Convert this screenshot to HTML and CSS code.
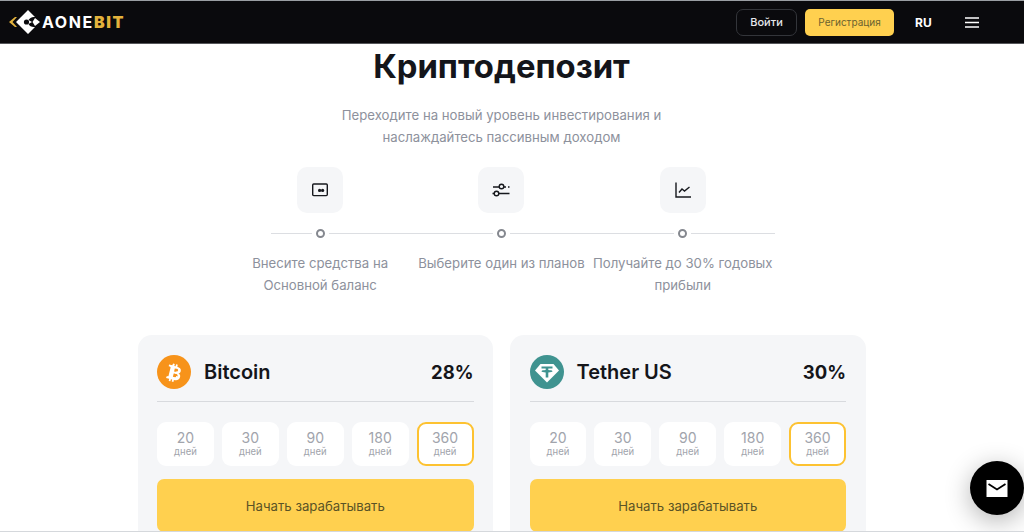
FILE: index.html
```html
<!DOCTYPE html>
<html lang="ru">
<head>
    <meta charset="utf-8">
    <title>Криптодепозит</title>
    <meta name="viewport" content="width=device-width, initial-scale=1.0">
    <link rel="stylesheet" href="styles.css">
</head>
<body>
    <header class="topbar">
        <a class="logo" href="#">
            <svg class="logo-mark" viewBox="0 0 33 26" width="33" height="26">
                <path d="M6 8 L0 13 L6 18 L8 18 L3.5 13 L8 8 Z" fill="#e3b23c"/>
                <path d="M19 1 L26 8 C23 7.5 20.5 9 19.5 11 L23 13 L19.5 15 C20.5 17 23 18.5 26 18 L19 25 L7 13 Z" fill="#fff"/>
                <path d="M26 9 L31 13 L26 17 L23.5 13 Z" fill="#fff"/>
                <circle cx="17.5" cy="13" r="2.6" fill="#0a0a0d"/>
            </svg>
            <span class="logo-text">AONE<b>BIT</b></span>
        </a>
        <nav class="topbar-nav">
            <a class="btn-login" href="#">Войти</a>
            <a class="btn-register" href="#">Регистрация</a>
            <span class="lang">RU</span>
            <svg class="burger" viewBox="0 0 14 11" width="14" height="11">
                <path d="M0 1 H14 M0 5.5 H14 M0 10 H14" stroke="#fff" stroke-width="1.6"/>
            </svg>
        </nav>
    </header>

    <main class="content">
        <h1>Криптодепозит</h1>
        <p class="lead">Переходите на новый уровень инвестирования и<br>наслаждайтесь пассивным доходом</p>

        <div class="steps">
            <div class="step step-first">
                <div class="step-icon">
                    <svg viewBox="0 0 16 14" width="16" height="14" fill="none">
                        <rect x="0.7" y="1" width="14.6" height="11.6" rx="1" stroke="#16181d" stroke-width="1.4"/>
                        <circle cx="7.6" cy="7.4" r="1.6" fill="#16181d"/>
                        <circle cx="10.6" cy="7.4" r="1.6" fill="#16181d"/>
                    </svg>
                </div>
                <div class="step-line"><i></i><span class="dot"></span><i></i></div>
                <p>Внесите средства на<br>Основной баланс</p>
            </div>
            <div class="step">
                <div class="step-icon">
                    <svg viewBox="0 0 18 14" width="18" height="14" fill="none" stroke="#16181d" stroke-width="1.4">
                        <path d="M1 4 H7 M12 4 H14 M16 4 H17.5 M0.5 10.5 H2 M7 10.5 H17.5"/>
                        <circle cx="9.5" cy="3.5" r="2.3"/>
                        <circle cx="4.5" cy="10.5" r="2.3"/>
                    </svg>
                </div>
                <div class="step-line"><i></i><span class="dot"></span><i></i></div>
                <p>Выберите один из планов</p>
            </div>
            <div class="step">
                <div class="step-icon">
                    <svg viewBox="0 0 16 16" width="16" height="16" fill="none" stroke="#16181d" stroke-width="1.4">
                        <path d="M1 0.5 V15 H16"/>
                        <path d="M4 10.5 L7 7 L9.5 9 L14.5 5"/>
                    </svg>
                </div>
                <div class="step-line"><i></i><span class="dot"></span><i></i></div>
                <p>Получайте до 30% годовых<br>прибыли</p>
            </div>
        </div>

        <div class="plans">
            <section class="plan">
                <div class="plan-head">
                    <svg class="coin" viewBox="0 0 34 34" width="34" height="34">
                        <circle cx="17" cy="17" r="17" fill="#f7931a"/>
                        <path transform="translate(1.5 0)" fill="#fff" fill-rule="evenodd" d="M14.6 8.6 l1.7.4 -.5 2 1.3.3 .5-2 1.7.4 -.5 2.1 c2.4.8 3.9 1.9 3.5 4.1 -.3 1.5-1.1 2.3-2.3 2.5 1.6.9 2.2 2.2 1.4 4.2 -.9 2.6-3.1 2.9-6 2.3 l-.5 2.1 -1.7-.4 .5-2 -1.3-.3 -.5 2 -1.7-.4 .5-2.1 -3.2-.8 .9-2 c.8.2 1.3.4 1.6 0 l2.1-8.5 c0-.5-.3-.8-.9-1 l-1-.3 .4-1.8 3.2.8 z M15.2 18.4 l-.8 3.4 c1.5.4 4.2.8 4.7-1.1 .5-2-2.4-1.9-3.9-2.3 z M16.3 13.4 l-.7 3.1 c1.2.3 3.6.6 4-1.2 .4-1.8-2.1-1.6-3.3-1.9 z"/>
                    </svg>
                    <span class="plan-name">Bitcoin</span>
                    <span class="plan-rate">28%</span>
                </div>
                <div class="terms">
                    <div class="term">20<small>дней</small></div>
                    <div class="term">30<small>дней</small></div>
                    <div class="term">90<small>дней</small></div>
                    <div class="term">180<small>дней</small></div>
                    <div class="term term-active">360<small>дней</small></div>
                </div>
                <a class="btn-start" href="#">Начать зарабатывать</a>
            </section>
            <section class="plan">
                <div class="plan-head">
                    <svg class="coin" viewBox="0 0 34 34" width="34" height="34">
                        <circle cx="17" cy="17" r="17" fill="#3f9390"/>
                        <path d="M10.5 9 H23.5 L29 15.5 L17 27.5 L5 15.5 Z" fill="#fff"/>
                        <path d="M11.5 11.5 H22.5 V13.5 H18.3 V15 C20.5 15.1 22.5 15.5 22.5 16.2 C22.5 16.9 20.5 17.3 18.3 17.4 V22.5 H15.7 V17.4 C13.5 17.3 11.5 16.9 11.5 16.2 C11.5 15.5 13.5 15.1 15.7 15 V13.5 H11.5 Z" fill="#3f9390"/>
                    </svg>
                    <span class="plan-name">Tether US</span>
                    <span class="plan-rate">30%</span>
                </div>
                <div class="terms">
                    <div class="term">20<small>дней</small></div>
                    <div class="term">30<small>дней</small></div>
                    <div class="term">90<small>дней</small></div>
                    <div class="term">180<small>дней</small></div>
                    <div class="term term-active">360<small>дней</small></div>
                </div>
                <a class="btn-start" href="#">Начать зарабатывать</a>
            </section>
        </div>
    </main>

    <a class="chat" href="#">
        <svg viewBox="0 0 22 17" width="22" height="17">
            <path d="M0.5 0 H21.5 V17 H0.5 Z" fill="#fff"/>
            <path d="M2.5 4 L11 9.5 L19.5 4" fill="none" stroke="#000" stroke-width="1.8"/>
        </svg>
    </a>
    <div class="window-edge"></div>
</body>
</html>
```

FILE: styles.css
```css
* {
    box-sizing: border-box;
}

html, body {
    height: 100%;
}

body {
    margin: 0;
    font-family: 'Inter', 'Noto Sans', sans-serif;
    background-color: #ffffff;
    color: #14151a;
    overflow: hidden;
}

a {
    text-decoration: none;
}

.topbar {
    height: 44px;
    border-top: 1px solid #9a9ea3;
    border-bottom: 1px solid #55565a;
    background-color: #0a0a0d;
    display: flex;
    align-items: center;
    justify-content: space-between;
    padding: 0 45px 0 9px;
}

.logo {
    display: flex;
    align-items: center;
}

.logo-text {
    font-size: 16px;
    font-weight: 700;
    letter-spacing: 1.6px;
    color: #ffffff;
}

.logo-text b {
    color: #e3b23c;
}

.topbar-nav {
    display: flex;
    align-items: center;
}

.btn-login {
    width: 61px;
    height: 27px;
    margin-right: 8px;
    border: 1px solid #33353a;
    border-radius: 7px;
    color: #e6e8ec;
    font-size: 11px;
    font-weight: 500;
    display: flex;
    align-items: center;
    justify-content: center;
}

.btn-register {
    width: 89px;
    height: 27px;
    margin-right: 21px;
    border-radius: 5px;
    background-color: #ffd04f;
    color: #6b6330;
    font-size: 10px;
    display: flex;
    align-items: center;
    justify-content: center;
}

.lang {
    width: 17px;
    margin-right: 33px;
    color: #ffffff;
    font-size: 12px;
    font-weight: 700;
}

/* page column sits a little left of the window centre */
.content {
    width: 728px;
    margin-left: 137.5px;
    display: flex;
    flex-direction: column;
    align-items: center;
}

h1 {
    margin: 0;
    font-size: 32.8px;
    line-height: 44px;
    font-weight: 700;
    color: #14151a;
}

.lead {
    margin: 16px 0 0;
    font-size: 13.2px;
    line-height: 22px;
    text-align: center;
    color: #8d919c;
}

.steps {
    width: 544px;
    margin-top: 19px;
    display: grid;
    grid-template-columns: repeat(3, 181.3px);
}

.step {
    display: flex;
    flex-direction: column;
    align-items: center;
}

.step-icon {
    width: 46px;
    height: 46px;
    border-radius: 10px;
    background-color: #f5f6f8;
    display: flex;
    align-items: center;
    justify-content: center;
}

.step-line {
    width: calc(100% + 4px);
    margin-top: 16px;
    height: 9px;
    display: grid;
    grid-template-columns: 1fr auto 1fr;
    align-items: center;
    gap: 4px;
}

.step-line i {
    height: 1px;
    background-color: #dcdee2;
}

.step-first .step-line i:first-child {
    margin-left: 43px;
}

.dot {
    width: 9px;
    height: 9px;
    border: 2px solid #85888f;
    border-radius: 50%;
}

.step p {
    margin: 14px 0 0;
    font-size: 13.2px;
    line-height: 22px;
    text-align: center;
    white-space: nowrap;
    color: #8d919c;
}

.plans {
    margin-top: 39px;
    display: grid;
    grid-template-columns: 355.5px 355.5px;
    gap: 17px;
}

.plan {
    height: 210px;
    border-radius: 14px;
    background-color: #f5f6f8;
    padding: 20px 19.5px 0;
}

.plan-head {
    height: 47px;
    padding-bottom: 13px;
    border-bottom: 1px solid #d8dade;
    display: flex;
    align-items: center;
}

.coin {
    flex-shrink: 0;
}

.plan-name {
    margin-left: 13px;
    font-size: 20px;
    font-weight: 600;
}

.plan-rate {
    margin-left: auto;
    font-size: 18.5px;
    font-weight: 700;
}

.terms {
    margin-top: 20px;
    display: grid;
    grid-template-columns: repeat(5, 1fr);
    gap: 8px;
}

.term {
    height: 44px;
    border-radius: 9px;
    background-color: #ffffff;
    padding-top: 8px;
    font-size: 14px;
    line-height: 15px;
    text-align: center;
    color: #a1a4ac;
}

.term small {
    display: block;
    font-size: 9.5px;
    line-height: 13px;
}

.term-active {
    border: 2px solid #fdc231;
    padding-top: 6px;
}

.btn-start {
    height: 53px;
    margin-top: 13px;
    border-radius: 7px;
    background-color: #ffd04f;
    color: #5a5326;
    font-size: 13.2px;
    display: flex;
    align-items: center;
    justify-content: center;
}

.chat {
    position: fixed;
    left: 970px;
    top: 461px;
    width: 54px;
    height: 54px;
    border-radius: 50%;
    background-color: #000000;
    box-shadow: 0 6px 26px rgba(0, 0, 0, 0.3);
    display: flex;
    align-items: center;
    justify-content: center;
}

.window-edge {
    position: fixed;
    left: 0;
    right: 0;
    bottom: 0;
    height: 1px;
    background-color: #d5d8dc;
}
```
